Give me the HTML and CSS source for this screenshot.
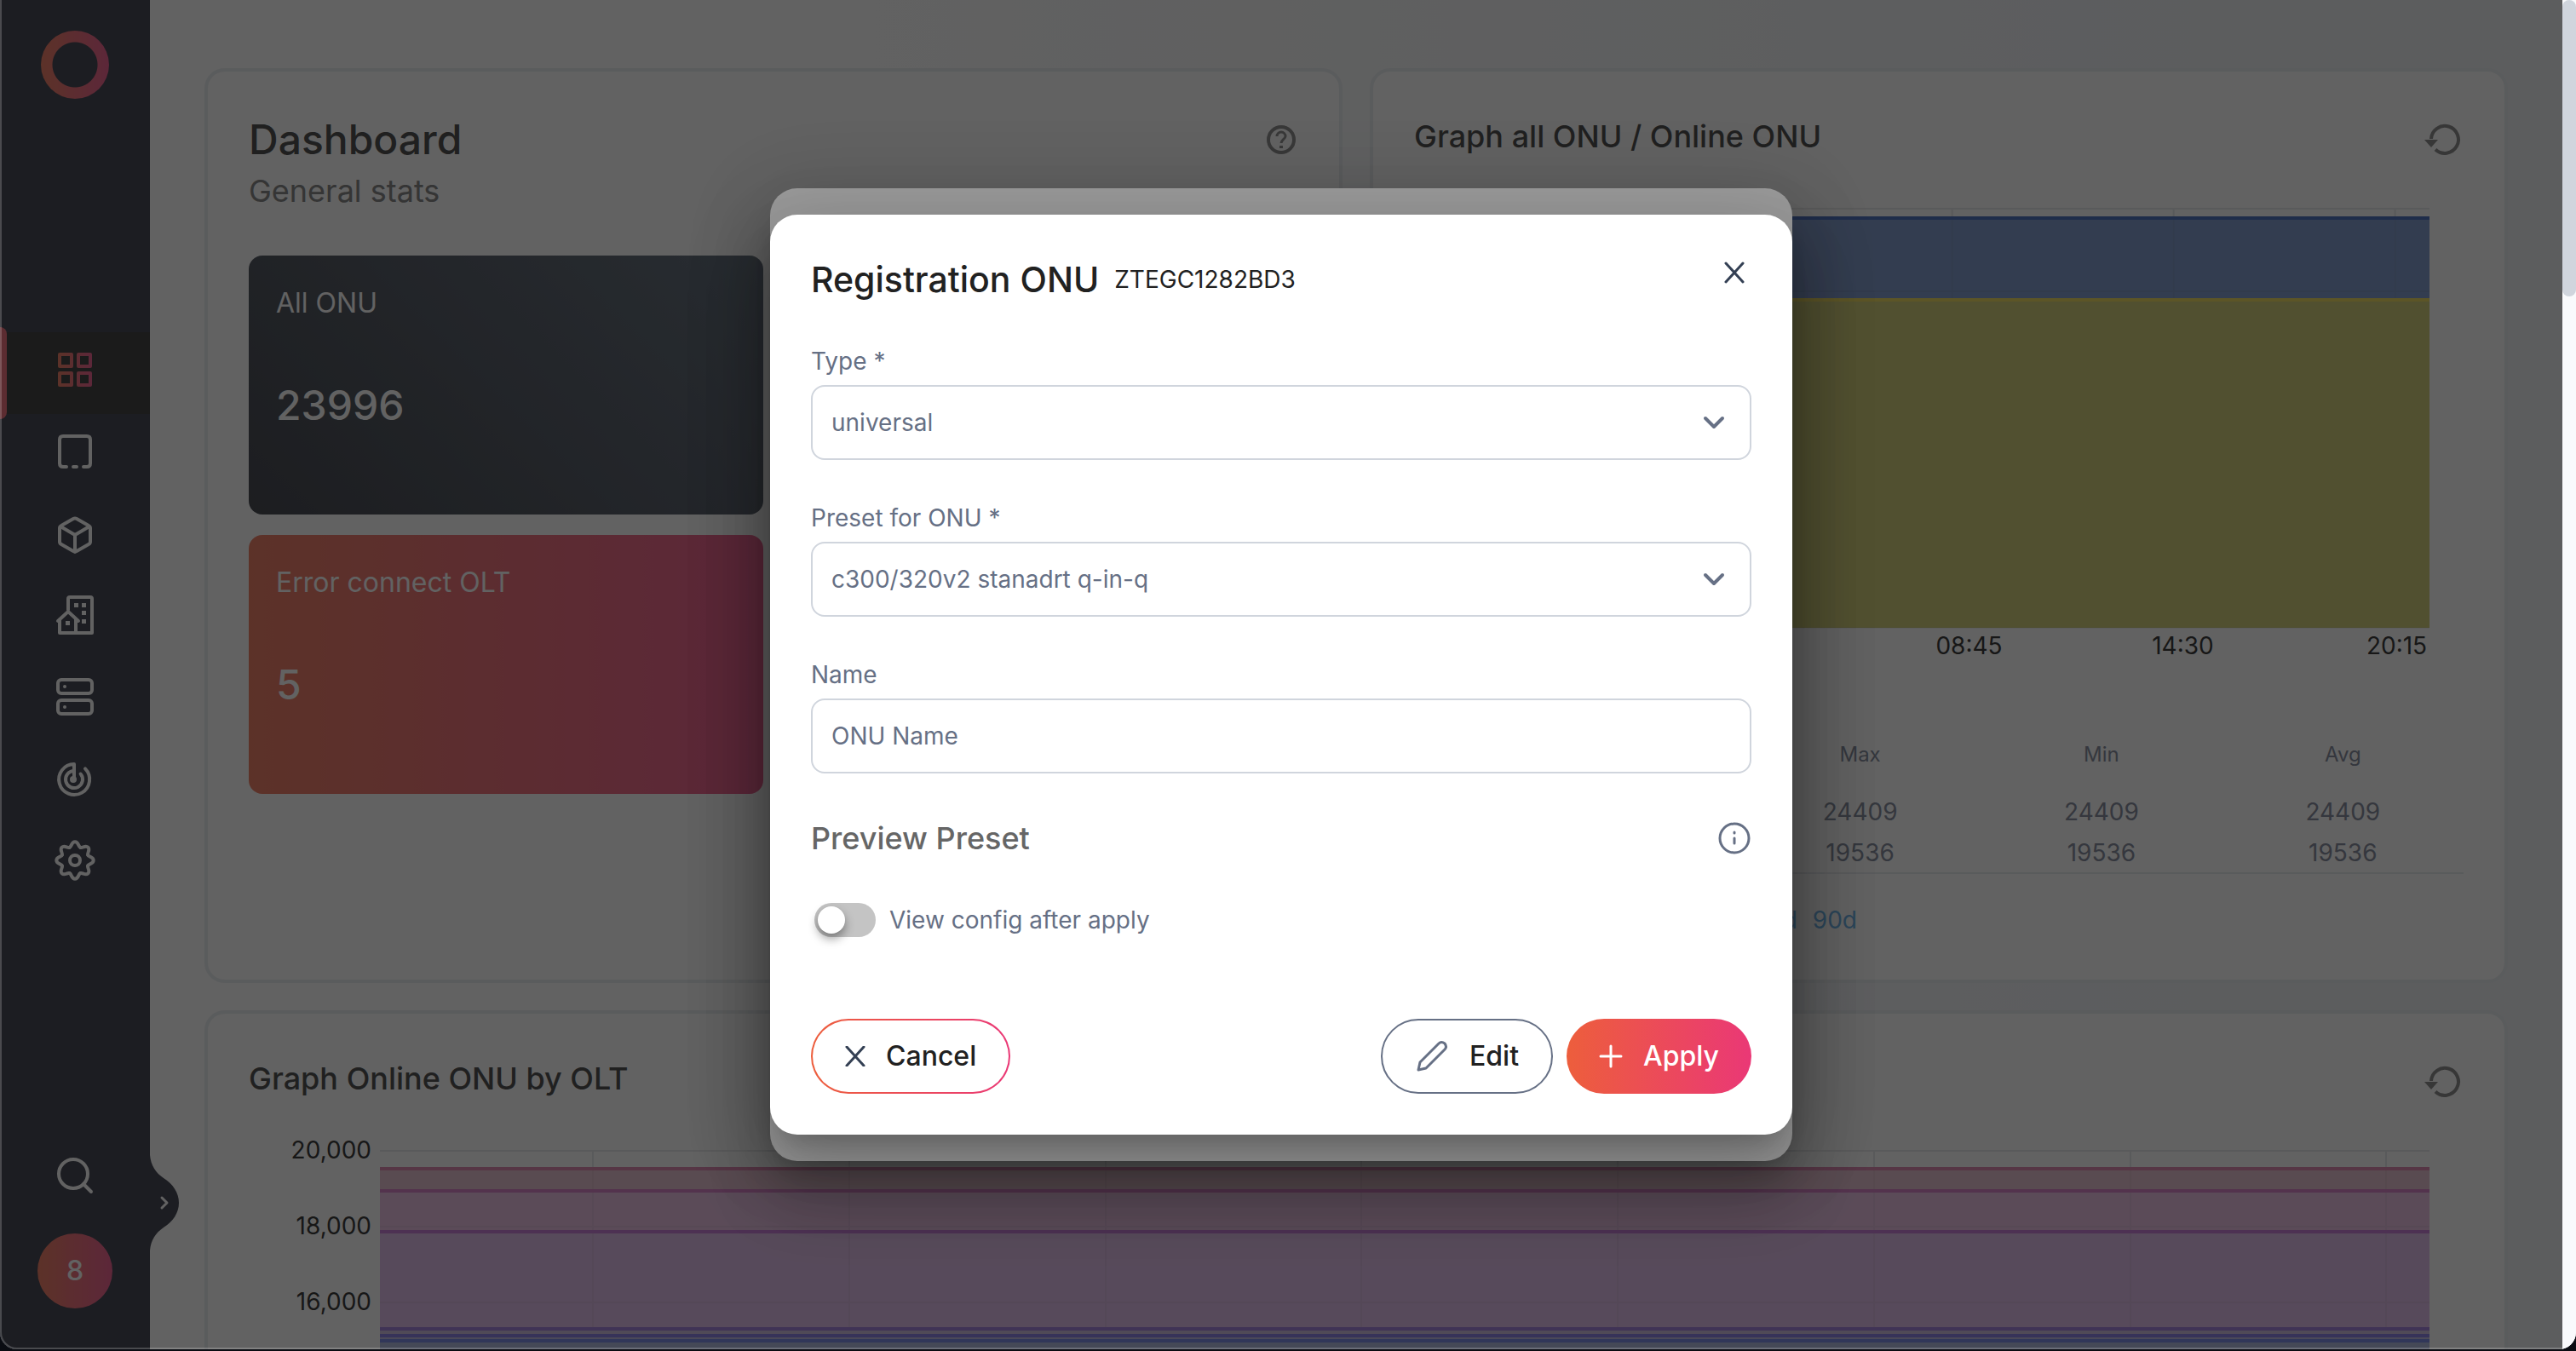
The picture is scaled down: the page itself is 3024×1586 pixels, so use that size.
FILE: index.html
```html
<!DOCTYPE html>
<html lang="en">
<head>
<meta charset="utf-8">
<meta name="viewport" content="width=device-width, initial-scale=1">
<title>Dashboard</title>
<link rel="stylesheet" href="styles.css">
</head>
<body>
<svg class="defs" aria-hidden="true">
  <defs>
    <linearGradient id="accent" gradientUnits="userSpaceOnUse" x1="-20" y1="0" x2="20" y2="0">
      <stop offset="0" stop-color="#ed5e3c"/><stop offset="1" stop-color="#ea3876"/>
    </linearGradient>
    <path id="tooth" d="M-6.3-15.2C-3.6-16.3-4.4-21.7 0-21.7S3.6-16.3 6.3-15.2"/>
  </defs>
</svg>
<div class="window">
  <aside class="sidebar">
    <a class="logo" href="#" aria-label="Home"></a>
    <nav class="nav" aria-label="Main">
      <a class="nav-item active" href="#" aria-label="Dashboard">
        <svg class="icon" viewBox="-24 -24 48 48"><g stroke="url(#accent)"><rect x="-18" y="-18" width="14" height="14"/><rect x="4" y="-18" width="14" height="14"/><rect x="-18" y="4" width="14" height="14"/><rect x="4" y="4" width="14" height="14"/></g></svg>
      </a>
      <a class="nav-item" href="#" aria-label="Frames">
        <svg class="icon" viewBox="-24 -24 48 48"><path d="M-10 18H-14Q-18 18-18 14V-14Q-18-18-14-18H14Q18-18 18-14V14Q18 18 14 18H10M-2 18H2"/></svg>
      </a>
      <a class="nav-item" href="#" aria-label="Units">
        <svg class="icon" viewBox="-24 -26 48 48"><path d="M-2-19Q0-20 2-19L16-11Q18-10 18-8V8Q18 10 16 11L2 19Q0 20-2 19L-16 11Q-18 10-18 8V-8Q-18-10-16-11ZM-17-10L0 0 17-10M0 0V20"/></svg>
      </a>
      <a class="nav-item" href="#" aria-label="Buildings">
        <svg class="icon" viewBox="-24 -24 48 48"><path d="M-8-6V-19Q-8-21-6-21H18Q20-21 20-19V21H-18V5M1 5V21M-20 7L-8-4 4 7"/><path class="solid" d="M-1-14h5v5h-5zM8-14h5v5H8zM8-5h5v5H8zM8 5h5v5H8zM-11 7h5v5h-5z"/></svg>
      </a>
      <a class="nav-item" href="#" aria-label="Servers">
        <svg class="icon" viewBox="-24 -24 48 48"><rect x="-20" y="-20" width="40" height="16" rx="4"/><rect x="-20" y="4" width="40" height="16" rx="4"/><circle class="solid" cx="-12" cy="-12" r="2"/><circle class="solid" cx="-12" cy="12" r="2"/></svg>
      </a>
      <a class="nav-item" href="#" aria-label="Monitoring">
        <svg class="icon" viewBox="-23 -25 48 48"><path d="M0 0V-18A18 18 0 1 0 13-12.6M0-10A10 10 0 1 0 7.6-6.5"/><circle class="solid" cx="-1" cy="0" r="4"/></svg>
      </a>
      <a class="nav-item" href="#" aria-label="Settings">
        <svg class="icon" viewBox="-24 -24 48 48"><use href="#tooth"/><use href="#tooth" transform="rotate(45)"/><use href="#tooth" transform="rotate(90)"/><use href="#tooth" transform="rotate(135)"/><use href="#tooth" transform="rotate(180)"/><use href="#tooth" transform="rotate(225)"/><use href="#tooth" transform="rotate(270)"/><use href="#tooth" transform="rotate(315)"/><circle r="6"/></svg>
      </a>
    </nav>
    <div class="sidebar-foot">
      <button class="search" type="button" aria-label="Search">
        <svg class="icon" viewBox="-24 -24 48 48"><circle cx="-2" cy="-2" r="17"/><path d="M10 10L19 19"/></svg>
      </button>
      <button class="avatar" type="button">8</button>
    </div>
    <button class="flap" type="button" aria-label="Expand menu">
      <svg viewBox="0 0 36 112" width="36" height="112"><path fill="#131728" d="M0 0C1 12 7 21 16 27 27 34 34 44 34 56S27 78 16 85C7 91 1 100 0 112Z"/><path fill="none" stroke="#fff" stroke-width="3" stroke-linecap="round" stroke-linejoin="round" d="M14 50L20 56 14 62"/></svg>
    </button>
  </aside>

  <main class="main">
    <section class="card">
      <header class="card-head">
        <div>
          <h1 class="page-title">Dashboard</h1>
          <p class="subtitle">General stats</p>
        </div>
        <button class="icon-btn help" type="button" aria-label="Help">
          <svg viewBox="-20 -20 40 40" width="40" height="40"><circle r="15"/><path d="M-5-4A5 5 0 0 1 5-4C5-1 0 0 0 4"/><path d="M-2 7H2V10H-2Z" class="dot"/></svg>
        </button>
      </header>
      <div class="tiles">
        <article class="tile dark"><h2>All ONU</h2><p>23996</p></article>
        <article class="tile hot"><h2>Error connect OLT</h2><p>5</p></article>
      </div>
    </section>

    <section class="card">
      <header class="card-head">
        <h2 class="card-title">Graph all ONU / Online ONU</h2>
        <button class="icon-btn reload" type="button" aria-label="Reload">
          <svg viewBox="-24 -24 48 48" width="48" height="48"><path d="M-14-1A16 16 0 1 1-9 11.500" /><path class="dot" d="M-22 0H-6L-14 9Z"/></svg>
        </button>
      </header>
      <div class="plot-pad">
        <svg class="plot plot-total" viewBox="0 0 1120 494" preserveAspectRatio="none">
          <path class="grid" d="M0 1H1120M328 0V20M579 0V20M830 0V20M1081 0V20"/>
          <rect y="12" width="1120" height="96" fill="#6284c2"/>
          <rect y="108" width="1120" height="385" fill="#c8c558"/>
          <rect y="10" width="1120" height="4" fill="#1e4db0"/>
          <rect y="106" width="1120" height="4" fill="#ead339"/>
          <path class="grid faint" d="M0 98H1120M328 14V106M579 14V106M830 14V106M1081 14V106M0 493H1120"/>
        </svg>
      </div>
      <div class="x-axis"><span>08:45</span><span>14:30</span><span>20:15</span></div>
      <table class="stats">
        <thead><tr><th></th><th>Max</th><th>Min</th><th>Avg</th></tr></thead>
        <tbody>
          <tr><td></td><td>24409</td><td>24409</td><td>24409</td></tr>
          <tr><td></td><td>19536</td><td>19536</td><td>19536</td></tr>
        </tbody>
      </table>
      <div class="ranges"><a href="#">30d</a><a href="#">90d</a></div>
    </section>

    <section class="card wide">
      <header class="card-head">
        <h2 class="card-title">Graph Online ONU by OLT</h2>
        <button class="icon-btn reload" type="button" aria-label="Reload">
          <svg viewBox="-24 -24 48 48" width="48" height="48"><path d="M-14-1A16 16 0 1 1-9 11.500" /><path class="dot" d="M-22 0H-6L-14 9Z"/></svg>
        </button>
      </header>
      <div class="plot-pad with-axis">
        <div class="y-axis"><span>20,000</span><span>18,000</span><span>16,000</span></div>
        <svg class="plot plot-olt" viewBox="0 0 2406 500" preserveAspectRatio="none">
          <path class="grid" d="M0 1H2406M250 0V22M551 0V22M852 0V22M1152 0V22M1453 0V22M1754 0V22M2055 0V22M2355 0V22"/>
          <rect y="22" width="2406" height="26" fill="#e4b4c8"/>
          <rect y="48" width="2406" height="48" fill="#e7b4e0"/>
          <rect y="96" width="2406" height="114" fill="#ddb0e7"/>
          <rect y="210" width="2406" height="8" fill="#c4b0dc"/>
          <rect y="218" width="2406" height="6" fill="#b4ace0"/>
          <rect y="224" width="2406" height="276" fill="#9faddd"/>
          <path class="grid faint" d="M0 90H2406M0 179H2406M250 22V210M551 22V210M852 22V210M1152 22V210M1453 22V210M1754 22V210M2055 22V210M2355 22V210"/>
          <rect y="20" width="2406" height="4" fill="#d6699f"/>
          <rect y="46" width="2406" height="4" fill="#cf62bb"/>
          <rect y="94" width="2406" height="4" fill="#bb5bcf"/>
          <rect y="208" width="2406" height="4" fill="#8e62d6"/>
          <rect y="216" width="2406" height="4" fill="#7062e4"/>
          <rect y="222" width="2406" height="4" fill="#5b70e4"/>
        </svg>
      </div>
    </section>
  </main>

  <div class="scrollbar" aria-hidden="true"><div class="thumb"></div></div>

  <div class="overlay"><div class="dialog dialog-back"></div></div>
  <div class="overlay">
    <form class="dialog" role="dialog" aria-labelledby="dlg-title">
      <header class="dialog-head">
        <h2 id="dlg-title">Registration ONU</h2>
        <span class="serial">ZTEGC1282BD3</span>
        <button class="icon-btn close" type="button" aria-label="Close">
          <svg viewBox="-20 -20 40 40" width="40" height="40"><path d="M-10-11L10 11M10-11L-10 11"/></svg>
        </button>
      </header>
      <div class="field">
        <label for="type">Type *</label>
        <div class="select">
          <select id="type"><option>universal</option></select>
          <svg viewBox="0 0 40 40" width="40" height="40"><path d="M10 15L20 25 30 15"/></svg>
        </div>
      </div>
      <div class="field">
        <label for="preset">Preset for ONU *</label>
        <div class="select">
          <select id="preset"><option>c300/320v2 stanadrt q-in-q</option></select>
          <svg viewBox="0 0 40 40" width="40" height="40"><path d="M10 15L20 25 30 15"/></svg>
        </div>
      </div>
      <div class="field">
        <label for="name">Name</label>
        <input id="name" type="text" placeholder="ONU Name">
      </div>
      <div class="preview">
        <h3>Preview Preset</h3>
        <button class="icon-btn info" type="button" aria-label="Info">
          <svg viewBox="-20 -20 40 40" width="40" height="40"><circle r="17"/><path d="M0 0V6M0-7V-6"/></svg>
        </button>
      </div>
      <div class="toggle-row">
        <input id="view" class="toggle" type="checkbox">
        <label for="view">View config after apply</label>
      </div>
      <footer class="actions">
        <button class="btn cancel" type="button">
          <svg viewBox="-12 -12 24 24" width="24" height="24"><path d="M-10-11L10 11M10-11L-10 11"/></svg>Cancel
        </button>
        <button class="btn edit" type="button">
          <svg viewBox="0 0 40 40" width="40" height="40"><path d="M4 36L6 27 28 5Q31 2 35 5 38 9 35 12L13 34Z"/></svg>Edit
        </button>
        <button class="btn apply" type="submit">
          <svg viewBox="-14 -14 28 28" width="28" height="28"><path d="M0-12V12M-12 0H12"/></svg>Apply
        </button>
      </footer>
    </form>
  </div>
</div>
</body>
</html>
```
FILE: styles.css
```css
* { box-sizing: border-box; margin: 0; }

body {
  height: 100vh;
  padding-bottom: 2px;
  background: #0a0c12;
  font: 400 28px/40px Inter, "Liberation Sans", sans-serif;
  color: #212121;
  overflow: hidden;
}

button { font: inherit; color: inherit; border: 0; background: none; padding: 0; cursor: pointer; }
a { color: inherit; text-decoration: none; }
svg { display: block; }
h1, h2, h3 { font-weight: 500; }

.defs { position: absolute; width: 0; height: 0; }

.window {
  position: relative;
  display: flex;
  height: 100%;
  overflow: hidden;
  border-radius: 0 0 20px 20px;
  background: #fff;
}

/* thin light rim of the window */
.window::after {
  content: "";
  position: absolute;
  inset: 0;
  border: solid rgba(255, 255, 255, .2);
  border-width: 0 0 2px 2px;
  border-radius: 0 0 20px 20px;
  pointer-events: none;
}

/* Sidebar */
.sidebar {
  position: relative;
  flex: none;
  width: 176px;
  display: flex;
  flex-direction: column;
  align-items: center;
  padding: 36px 0 48px;
  background: #131728;
  color: #fff;
}

.logo {
  width: 80px;
  height: 80px;
  border-radius: 50%;
  background: radial-gradient(circle, #131728 26px, transparent 27px), linear-gradient(90deg, #ed5e3c, #ea3876);
}

.nav { width: 100%; margin-top: 274px; }

.nav-item {
  position: relative;
  display: flex;
  justify-content: center;
  height: 96px;
  padding-top: 20px;
}

.nav-item.active { background: #0f0f0f; }
.nav-item.active::before {
  content: "";
  position: absolute;
  inset: -6px auto -6px 0;
  width: 8px;
  border-radius: 0 8px 8px 0;
  background: #eb4b59;
}

.icon {
  width: 48px;
  height: 48px;
  fill: none;
  stroke: #fff;
  stroke-width: 4;
  stroke-linecap: round;
  stroke-linejoin: round;
}
.icon .solid { fill: #fff; stroke: none; }

.sidebar-foot { margin-top: auto; display: grid; gap: 24px; justify-items: center; }
.search { width: 148px; height: 88px; border-radius: 16px; display: grid; place-items: center; }
.avatar {
  width: 88px;
  height: 88px;
  border-radius: 50%;
  font-size: 32px;
  font-weight: 500;
  background: linear-gradient(90deg, #ed5e3c, #ea3876);
}
.flap { position: absolute; left: 100%; bottom: 116px; }

/* Page */
.main {
  flex: 1;
  display: grid;
  grid-template-columns: 1fr 1fr;
  gap: 32px;
  align-content: start;
  padding: 80px 64px 0;
  overflow: hidden;
  background: linear-gradient(90deg, #fff 0%, #fff 30%, #ebeff4 85%);
}

.card {
  padding: 48px;
  border: 4px solid #e6eaef;
  border-radius: 24px;
  background: #fff;
}
.card.wide { grid-column: 1 / -1; }

.card-head { display: flex; justify-content: space-between; align-items: flex-start; min-height: 64px; }
.page-title { font-size: 48px; line-height: 64px; }
.subtitle { font-size: 36px; line-height: 56px; color: #666; }
.card-title { font-size: 36px; line-height: 56px; }

.icon-btn { display: grid; place-items: center; }
.icon-btn svg { fill: none; stroke-linecap: round; stroke-linejoin: round; }
.help, .reload { height: 64px; }
.help svg, .reload svg { stroke: #707070; stroke-width: 4; stroke-linecap: butt; }
.icon-btn .dot { fill: #707070; stroke: none; }
.help path { stroke-width: 3; }

.tiles { display: grid; grid-template-columns: 1fr 1fr; gap: 24px; margin-top: 48px; }
.tile {
  grid-column: 1;
  display: flex;
  flex-direction: column;
  gap: 64px;
  min-height: 304px;
  padding: 32px;
  border-radius: 16px;
  color: #fff;
}
.tile h2 { font-size: 32px; line-height: 48px; font-weight: 400; }
.tile p { font-size: 48px; line-height: 64px; font-weight: 500; }
.tile.dark { background: linear-gradient(45deg, #141721, #3c4a5b); }
.tile.hot { background: linear-gradient(90deg, #ed5e3c, #ea3876); }

.plot-pad { margin-top: 48px; padding-right: 40px; }
.plot-total { width: 100%; height: 494px; padding-left: 32px; }
.plot .grid { fill: none; stroke: #e4e5e8; stroke-width: 2; }
.plot .grid.faint { stroke: rgba(0, 0, 0, .05); }

.x-axis { display: flex; justify-content: flex-end; margin-right: -47px; color: #000; }
.x-axis span { width: 251px; text-align: center; }

.stats {
  width: 100%;
  margin-top: 64px;
  border-collapse: collapse;
  border-bottom: 2px solid #e4e7ec;
  table-layout: fixed;
  color: #667085;
  text-align: center;
}
.stats th { height: 87px; padding: 0; font-size: 24px; font-weight: 400; width: 23%; }
.stats th:first-child { width: 31%; }
.stats td { height: 48px; padding: 0; }

.ranges {
  display: flex;
  justify-content: flex-end;
  gap: 18px;
  width: 520px;
  max-width: 100%;
  margin-top: 32px;
  line-height: 44px;
  color: #479fe4;
}

.with-axis { display: flex; gap: 10px; }
.y-axis { flex: none; width: 144px; text-align: right; color: #000; }
.y-axis span { display: block; line-height: 89px; }
.y-axis span:first-child { margin-top: -44px; }
.plot-olt { flex: 1; min-width: 0; height: 500px; }

.scrollbar { flex: none; width: 16px; background: #f9fafc; }
.thumb { height: 22%; border-radius: 8px; background: #d0d5dd; }

/* Dialogs */
.overlay {
  position: absolute;
  inset: 0 16px 0 0;
  display: grid;
  place-items: center;
  background: rgba(33, 33, 33, .46);
}

.dialog {
  display: flex;
  flex-direction: column;
  gap: 48px;
  width: 1200px;
  max-width: 90%;
  padding: 48px;
  border-radius: 32px;
  background: #fff;
  box-shadow: 0 22px 30px -14px rgba(0, 0, 0, .2), 0 48px 76px 6px rgba(0, 0, 0, .14), 0 18px 92px 16px rgba(0, 0, 0, .12);
}
.dialog-back { height: 1142px; }

.dialog-head { display: flex; align-items: flex-start; gap: 18px; line-height: 56px; }
.dialog-head h2 { font-size: 41px; }
.close { margin-left: auto; }
.close svg { stroke: #344054; stroke-width: 3; }

.field { display: flex; flex-direction: column; gap: 8px; color: #667085; }
.field input, .field select {
  width: 100%;
  height: 88px;
  padding: 0 22px;
  border: 2px solid #d0d5dd;
  border-radius: 16px;
  background: #fff;
  font: inherit;
  color: #667085;
  appearance: none;
}
.field input::placeholder { color: #667085; opacity: 1; }
.select { display: grid; align-items: center; }
.select > * { grid-area: 1 / 1; }
.select svg {
  justify-self: end;
  margin-right: 24px;
  fill: none;
  stroke: #667085;
  stroke-width: 4;
  stroke-linecap: round;
  stroke-linejoin: round;
  pointer-events: none;
}

.preview { display: flex; justify-content: space-between; align-items: center; }
.preview h3 { font-size: 36px; line-height: 56px; color: #666; }
.info svg { stroke: #667085; stroke-width: 3; }

.toggle-row { display: flex; align-items: center; gap: 16px; padding-left: 4px; color: #667085; }
.toggle {
  appearance: none;
  width: 72px;
  height: 40px;
  padding: 4px;
  border-radius: 20px;
  background: #c4c4c4;
}
.toggle::before {
  content: "";
  display: block;
  width: 32px;
  height: 32px;
  border-radius: 50%;
  background: #fff;
  box-shadow: 0 6px 12px rgba(0, 0, 0, .4);
}

.actions { display: flex; gap: 16px; margin-top: 48px; }
.btn {
  display: flex;
  align-items: center;
  gap: 24px;
  height: 88px;
  padding: 0 38px;
  border-radius: 44px;
  font-size: 32px;
  font-weight: 500;
}
.btn svg { fill: none; stroke: #344054; stroke-width: 3; stroke-linecap: round; stroke-linejoin: round; }
.cancel {
  margin-right: auto;
  border: 2px solid transparent;
  background: linear-gradient(#fff, #fff) padding-box, linear-gradient(90deg, #ed5e3c, #ea3876) border-box;
}
.edit { border: 2px solid #667085; }
.edit svg { stroke: #667085; }
.apply { color: #fff; background: linear-gradient(90deg, #ed5e3c, #ea3876); }
.apply svg { stroke: #fff; }
```
